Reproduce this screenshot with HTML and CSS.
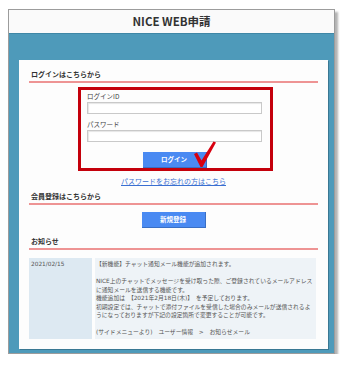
FILE: index.html
```html
<!DOCTYPE html>
<html lang="ja">
<head>
<meta charset="utf-8">
<title>NICE WEB申請</title>
<link rel="stylesheet" href="styles.css">
</head>
<body>
<div class="window">
  <div class="titlebar">NICE WEB申請</div>
  <div class="frame">
    <div class="card">
      <h2 class="heading">ログインはこちらから</h2>
      <div class="login-box">
        <label class="label">ログインID</label>
        <div class="input"></div>
        <label class="label label-2">パスワード</label>
        <div class="input"></div>
        <div class="btn-row">
          <div class="btn-wrap">
            <span class="btn">ログイン</span>
            <svg class="check" width="24" height="28" viewBox="0 0 24 28">
              <path d="M1 13 L4 11.5 L8.5 19.5 L20.5 0.5 L23 1.5 L9.5 26 L7.5 26 Z" fill="#d8000f"/>
            </svg>
          </div>
        </div>
      </div>
      <div class="link-row"><a class="link" href="#">パスワードをお忘れの方はこちら</a></div>
      <h2 class="heading heading-2">会員登録はこちらから</h2>
      <div class="btn-row btn-row-2"><span class="btn">新規登録</span></div>
      <h2 class="heading heading-3">お知らせ</h2>
      <div class="news">
        <div class="news-date">2021/02/15</div>
        <div class="news-body">
          <p>【新機能】チャット通知メール機能が追加されます。</p>
          <p>&nbsp;</p>
          <p>NICE上のチャットでメッセージを受け取った際、ご登録されているメールアドレスに通知メールを送信する機能です。</p>
          <p>機能追加は　【2021年2月18日(木)】　を予定しております。</p>
          <p>初期設定では、チャットで添付ファイルを受信した場合のみメールが送信されるようになっておりますが下記の設定箇所で変更することが可能です。</p>
          <p>&nbsp;</p>
          <p>(サイドメニューより)　ユーザー情報　&gt;　お知らせメール</p>
        </div>
      </div>
    </div>
  </div>
</div>
</body>
</html>
```

FILE: styles.css
```css
* { box-sizing: border-box; }
html, body { margin: 0; padding: 0; background: #ffffff; }
body {
  font-family: "Noto Sans CJK JP", "Noto Sans", sans-serif;
  color: #333;
}
.window {
  margin: 9px 0 0 8px;
  width: 327px;
  border: 1px solid #9c9c9c;
  box-shadow: 3px 3px 2px #b3b3b3;
  background: #4e9aba;
}
.titlebar {
  height: 24px;
  background: #fafafa;
  border-bottom: 1px solid #3f87a6;
  text-align: center;
  font-size: 11.5px;
  font-weight: bold;
  line-height: 23px;
  color: #333;
}
.frame {
  padding: 26px 6px 4px 10px;
}
.card {
  background: #fdfdfd;
  height: 289px;
  padding: 9px 10px 0 10px;
  box-shadow: 1px 1px 0 #3a7893;
}
.heading {
  margin: 0;
  font-size: 7px;
  font-weight: bold;
  line-height: 10px;
  height: 14px;
  padding: 0 0 2px 2px;
  border-bottom: 2px solid #ee9494;
  color: #333;
}
.login-box {
  width: 195px;
  height: 84px;
  margin: 4px auto 0 auto;
  position: relative;
  left: 2px;
  border: 3px solid #c4000b;
  padding: 2px 6px 0 6px;
  display: flex;
  flex-direction: column;
}
.label {
  display: block;
  font-size: 6.5px;
  line-height: 9px;
  height: 9px;
  color: #444;
}
.label-2 { margin-top: 6px; }
.input {
  width: 175px;
  height: 13px;
  margin-top: 1px;
  background: #fff;
  border: 1px solid #c9c9c9;
  box-shadow: inset 1px 1px 1px #e6e6e6;
}
.btn-row {
  display: flex;
  justify-content: center;
  margin-top: 10px;
}
.btn-wrap { position: relative; left: -1px; }
.btn {
  display: block;
  width: 64px;
  height: 16px;
  background: #4a8af2;
  border-right: 1px solid #3a6fc4;
  border-bottom: 1px solid #3a6fc4;
  color: #fff;
  font-size: 6.5px;
  font-weight: bold;
  line-height: 15px;
  text-align: center;
}
.check {
  position: absolute;
  left: 50px;
  top: -11px;
}
.link-row {
  text-align: center;
  margin-top: 1px;
  line-height: 10px;
  height: 10px;
}
.link {
  font-size: 7px;
  color: #3a6fd1;
  text-decoration: underline;
}
.heading-2 { margin-top: 9px; }
.btn-row-2 { margin-top: 7px; }
.heading-3 { margin-top: 8px; }
.news {
  margin-top: 8px;
  margin-right: 2px;
  display: flex;
  gap: 3px;
  height: 81px;
  font-family: "DejaVu Sans", "Noto Sans CJK JP", sans-serif;
}
.news-date {
  width: 63px;
  background: #dde9f2;
  font-size: 5.8px;
  line-height: 8.5px;
  padding: 2px 0 0 2px;
  color: #555;
}
.news-body {
  flex: 1;
  background: #eef3f7;
  font-size: 5.8px;
  line-height: 8.5px;
  padding: 2px 1px 0 1px;
  color: #555;
}
.news-body p { margin: 0; }
```
